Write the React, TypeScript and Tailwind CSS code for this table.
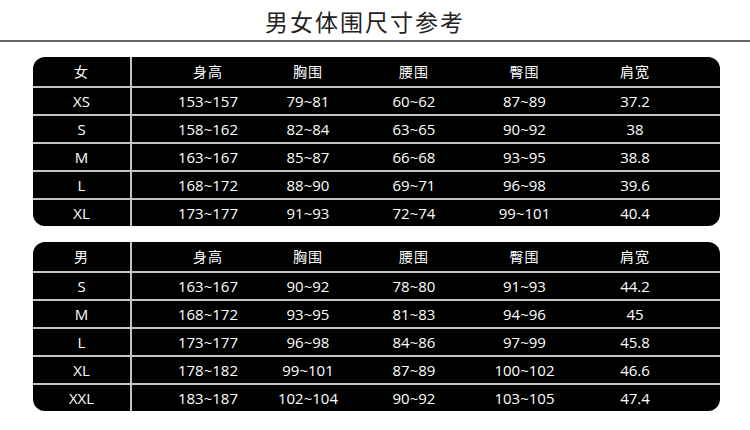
const head = ['身高', '胸围', '腰围', '臀围', '肩宽']

const women = [
  ['XS', '153~157', '79~81', '60~62', '87~89', '37.2'],
  ['S', '158~162', '82~84', '63~65', '90~92', '38'],
  ['M', '163~167', '85~87', '66~68', '93~95', '38.8'],
  ['L', '168~172', '88~90', '69~71', '96~98', '39.6'],
  ['XL', '173~177', '91~93', '72~74', '99~101', '40.4']
]

const men = [
  ['S', '163~167', '90~92', '78~80', '91~93', '44.2'],
  ['M', '168~172', '93~95', '81~83', '94~96', '45'],
  ['L', '173~177', '96~98', '84~86', '97~99', '45.8'],
  ['XL', '178~182', '99~101', '87~89', '100~102', '46.6'],
  ['XXL', '183~187', '102~104', '90~92', '103~105', '47.4']
]

const cellCls = ['pl-[27px]', '', '', '', '']

function SizeTable({ label, rows }: { label: string; rows: string[][] }) {
  return (
    <div className="ml-[33px] w-[687px] overflow-hidden rounded-[12px] bg-black pr-[30px] text-white">
      <div className="grid h-[29px] grid-cols-[99px_125px_102px_110px_111px_110px] items-stretch font-['Noto_Sans_CJK_SC',sans-serif] text-[14px] tracking-[1px]">
        <div className="flex items-center justify-center border-r-2 border-[#c4c4c4]">{label}</div>
        {head.map((h, i) => (
          <div key={h} className={`flex items-center justify-center ${cellCls[i]}`}>
            {h}
          </div>
        ))}
      </div>
      {rows.map((r) => (
        <div
          key={r[0]}
          className="-mr-[30px] border-t-2 border-[#c4c4c4] pr-[30px]"
        >
          <div className="grid h-[26px] grid-cols-[99px_125px_102px_110px_111px_110px] items-stretch font-['Open_Sans',sans-serif] text-[15px]">
            <div className="flex items-center justify-center border-r-2 border-[#c4c4c4]">{r[0]}</div>
            {r.slice(1).map((v, i) => (
              <div key={i} className={`flex items-center justify-center ${cellCls[i]}`}>
                {v}
              </div>
            ))}
          </div>
        </div>
      ))}
    </div>
  )
}

export default function App() {
  return (
    <div className="h-[430px] w-[750px] bg-white">
      <div className="flex h-[40px] items-center justify-center pr-[20px] pt-[3px] font-['Noto_Sans_CJK_SC',sans-serif] text-[23px] tracking-[2px] text-[#222]">
        男女体围尺寸参考
      </div>
      <div className="h-[2px] w-full bg-[#666]" />
      <div className="flex flex-col gap-[16px] pt-[15px]">
        <SizeTable label="女" rows={women} />
        <SizeTable label="男" rows={men} />
      </div>
    </div>
  )
}
